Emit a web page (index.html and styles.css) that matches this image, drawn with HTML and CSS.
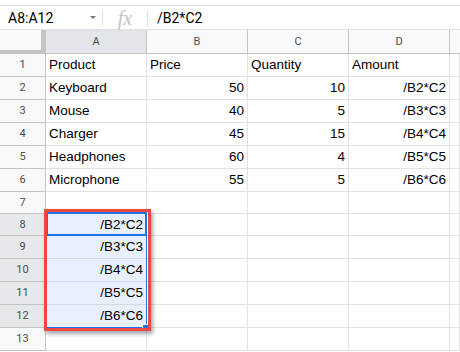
FILE: index.html
```html
<!DOCTYPE html>
<html lang="en">
<head>
    <meta charset="UTF-8">
    <title>Sheet</title>
    <link rel="stylesheet" href="styles.css">
</head>
<body>
    <div class="formula-bar">
        <div class="name-box">
            <span>A8:A12</span>
            <span class="arrow"></span>
        </div>
        <div class="fx">fx</div>
        <div class="formula">/B2*C2</div>
    </div>
    <div class="sheet">
        <div class="grid">
            <div class="corner"></div>
            <div class="col-head sel">A</div>
            <div class="col-head">B</div>
            <div class="col-head">C</div>
            <div class="col-head">D</div>
            <div class="col-head last"></div>

            <div class="row-head">1</div>
            <div class="cell">Product</div>
            <div class="cell">Price</div>
            <div class="cell">Quantity</div>
            <div class="cell">Amount</div>
            <div class="cell"></div>

            <div class="row-head">2</div>
            <div class="cell">Keyboard</div>
            <div class="cell num">50</div>
            <div class="cell num">10</div>
            <div class="cell num">/B2*C2</div>
            <div class="cell"></div>

            <div class="row-head">3</div>
            <div class="cell">Mouse</div>
            <div class="cell num">40</div>
            <div class="cell num">5</div>
            <div class="cell num">/B3*C3</div>
            <div class="cell"></div>

            <div class="row-head">4</div>
            <div class="cell">Charger</div>
            <div class="cell num">45</div>
            <div class="cell num">15</div>
            <div class="cell num">/B4*C4</div>
            <div class="cell"></div>

            <div class="row-head">5</div>
            <div class="cell">Headphones</div>
            <div class="cell num">60</div>
            <div class="cell num">4</div>
            <div class="cell num">/B5*C5</div>
            <div class="cell"></div>

            <div class="row-head">6</div>
            <div class="cell">Microphone</div>
            <div class="cell num">55</div>
            <div class="cell num">5</div>
            <div class="cell num">/B6*C6</div>
            <div class="cell"></div>

            <div class="row-head">7</div>
            <div class="cell"></div>
            <div class="cell"></div>
            <div class="cell"></div>
            <div class="cell"></div>
            <div class="cell"></div>

            <div class="row-head sel">8</div>
            <div class="cell num picked">/B2*C2</div>
            <div class="cell"></div>
            <div class="cell"></div>
            <div class="cell"></div>
            <div class="cell"></div>

            <div class="row-head sel">9</div>
            <div class="cell num picked">/B3*C3</div>
            <div class="cell"></div>
            <div class="cell"></div>
            <div class="cell"></div>
            <div class="cell"></div>

            <div class="row-head sel">10</div>
            <div class="cell num picked">/B4*C4</div>
            <div class="cell"></div>
            <div class="cell"></div>
            <div class="cell"></div>
            <div class="cell"></div>

            <div class="row-head sel">11</div>
            <div class="cell num picked">/B5*C5</div>
            <div class="cell"></div>
            <div class="cell"></div>
            <div class="cell"></div>
            <div class="cell"></div>

            <div class="row-head sel">12</div>
            <div class="cell num picked">/B6*C6</div>
            <div class="cell"></div>
            <div class="cell"></div>
            <div class="cell"></div>
            <div class="cell"></div>

            <div class="row-head">13</div>
            <div class="cell"></div>
            <div class="cell"></div>
            <div class="cell"></div>
            <div class="cell"></div>
            <div class="cell"></div>
        </div>
        <div class="range"></div>
        <div class="active"></div>
        <div class="handle"></div>
        <div class="mark"></div>
    </div>
</body>
</html>
```

FILE: styles.css
```css
body {
    margin: 0;
    padding: 0;
    background-color: #fff;
    font-family: "Liberation Sans", Arial, sans-serif;
    color: #000;
    overflow: hidden;
}
.formula-bar {
    display: flex;
    align-items: center;
    margin-top: 5px;
    height: 23px;
    border-top: 1px solid #e1e1e1;
    border-bottom: 1px solid #e1e1e1;
    font-family: Roboto, "Liberation Sans", sans-serif;
    font-size: 14px;
}
.name-box {
    display: flex;
    align-items: center;
    justify-content: space-between;
    box-sizing: border-box;
    width: 103px;
    height: 16px;
    padding-left: 8px;
    padding-right: 6px;
    border-right: 1px solid #e1e1e1;
}
.arrow {
    width: 0;
    height: 0;
    border-left: 3px solid transparent;
    border-right: 3px solid transparent;
    border-top: 3px solid #777;
}
.fx {
    width: 44px;
    height: 16px;
    line-height: 16px;
    text-align: center;
    border-right: 1px solid #e1e1e1;
    font-family: "Liberation Serif", serif;
    font-style: italic;
    font-size: 20px;
    color: #c4c4c4;
}
.formula {
    padding-left: 9px;
}
.sheet {
    position: relative;
}
.grid {
    display: grid;
    grid-template-columns: 46px 101px 101px 101px 101px 1fr;
    grid-template-rows: 24px repeat(6, 23px) 22px 22px repeat(5, 23px);
}
.corner {
    background-color: #f8f9fa;
    border-right: 5px solid #c4c4c4;
    border-bottom: 4px solid #c4c4c4;
}
.col-head {
    background-color: #f8f9fa;
    border-right: 1px solid #c4c4c4;
    border-bottom: 1px solid #c4c4c4;
    text-align: center;
    line-height: 23px;
    font-family: Roboto, "Liberation Sans", sans-serif;
    font-size: 11px;
    color: #4d4d4d;
}
.col-head.sel {
    background-color: #e3e5e8;
}
.col-head.last {
    border-right: none;
}
.row-head {
    background-color: #f8f9fa;
    border-right: 1px solid #c4c4c4;
    border-bottom: 1px solid #c4c4c4;
    text-align: center;
    line-height: 22px;
    font-family: Roboto, "Liberation Sans", sans-serif;
    font-size: 11px;
    color: #4d4d4d;
}
.row-head.sel {
    background-color: #e6e8eb;
}
.cell {
    border-right: 1px solid #e2e2e2;
    border-bottom: 1px solid #e2e2e2;
    padding: 0 3px;
    line-height: 22px;
    font-size: 13.5px;
    white-space: nowrap;
    overflow: hidden;
}
.cell.num {
    text-align: right;
}
.cell.picked {
    background-color: #e8f0fe;
    border-bottom-color: #d3dbe8;
}
.range {
    position: absolute;
    left: 46px;
    top: 182px;
    width: 101px;
    height: 116px;
    box-sizing: border-box;
    border: 1px solid #1a73e8;
}
.active {
    position: absolute;
    left: 46px;
    top: 182px;
    width: 101px;
    height: 24px;
    box-sizing: border-box;
    border: 2px solid #1a73e8;
}
.handle {
    position: absolute;
    left: 142px;
    top: 294px;
    width: 5px;
    height: 5px;
    background-color: #1a73e8;
    border: 1px solid #fff;
    border-right: none;
    border-bottom: none;
}
.mark {
    position: absolute;
    left: 44px;
    top: 179px;
    width: 107px;
    height: 122px;
    box-sizing: border-box;
    border: 3px solid #f04646;
    box-shadow: 2px 3px 4px rgba(0, 0, 0, 0.35);
}
```
